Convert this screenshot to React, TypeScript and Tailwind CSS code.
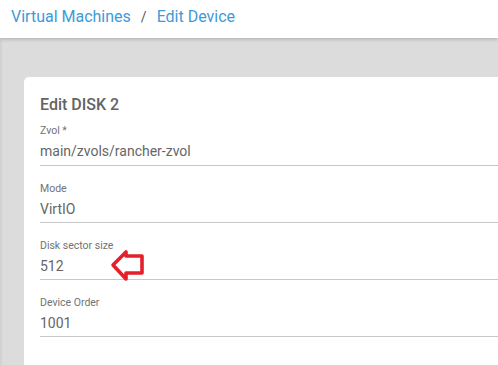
import React from 'react';

const fields = [
  { label: 'Zvol *', value: 'main/zvols/rancher-zvol', first: true },
  { label: 'Mode', value: 'VirtIO' },
  { label: 'Disk sector size', value: '512', marked: true },
  { label: 'Device Order', value: '1001' },
];

const PointerArrow: React.FC = () => (
  <svg width="36" height="34" viewBox="0 0 36 34" className="absolute left-[70px] top-[-7px]">
    <path
      d="M3 16 L16 3 L16 7 L32 7 L32 24 L16 24 L16 30 Z"
      fill="none"
      stroke="#e5202b"
      strokeWidth="3.6"
      strokeLinejoin="round"
    />
  </svg>
);

export default function App() {
  return (
    <div className="w-[498px] h-[365px] overflow-hidden bg-[#dcdcdc] font-['Roboto',sans-serif] flex flex-col">
      <div className="h-[38px] shrink-0 bg-white shadow-[0_1px_4px_rgba(0,0,0,0.22)] relative z-10 flex items-start pl-[11px] pt-[7px]">
        <span className="text-[16px] leading-[20px] text-[#3d9ad8]">Virtual Machines</span>
        <span className="text-[14px] leading-[20px] text-[#5a5a5a] ml-[10px] mr-[10px]">/</span>
        <span className="text-[16px] leading-[20px] text-[#3d9ad8]">Edit Device</span>
      </div>
      <div className="flex-1 border-l-2 border-[#d2d2d2] pl-[22px] pt-[39px]">
        <div className="bg-white rounded-tl-[5px] h-full pl-[16px] pt-[18px]">
          <h2 className="text-[16px] leading-[20px] font-medium text-[#636363]">Edit DISK 2</h2>
          {fields.map((f) => (
            <div
              key={f.label}
              className={`border-b border-[#c8c8c8] ${f.first ? 'pt-[9px] pb-[4px]' : 'pt-[16px] pb-[3px]'}`}
            >
              <div className="text-[10.5px] leading-[14px] text-[#727272]">{f.label}</div>
              <div className="relative mt-[3px] text-[14px] leading-[20px] text-[#666666]">
                {f.value}
                {f.marked && <PointerArrow />}
              </div>
            </div>
          ))}
        </div>
      </div>
    </div>
  );
}
